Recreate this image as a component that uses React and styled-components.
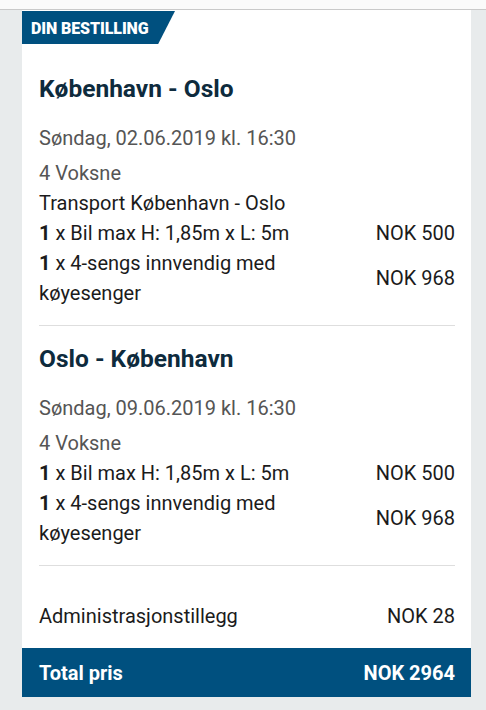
import React from "react";
import styled, { createGlobalStyle } from "styled-components";

const Global = createGlobalStyle`
  html, body { margin: 0; padding: 0; }
  body {
    background: #e8ebec;
    font-family: "Roboto", "Liberation Sans", sans-serif;
    color: #1b1b1b;
  }
`;

const TopStrip = styled.div`
  height: 9px;
  background: #fafafa;
  border-bottom: 1px solid #c9c9c9;
`;

const Page = styled.div`
  padding: 0 15px 13px 22px;
`;

const Card = styled.div`
  background: #fff;
  padding-top: 1px;
`;

const Tab = styled.div`
  display: inline-flex;
  align-items: center;
  height: 33px;
  width: 153px;
  box-sizing: border-box;
  padding: 2px 0 0 9px;
  background: #00507f;
  color: #fff;
  font-weight: 900;
  font-size: 16px;
  letter-spacing: -0.1px;
  clip-path: polygon(0 0, 100% 0, 89% 100%, 0 100%);
`;

const Body = styled.div`
  padding: 0 16px 0 17px;
`;

const Section = styled.div`
  padding: ${(p) => p.$top}px 0 17px;
  border-bottom: 1px solid #dedede;
`;

const Heading = styled.h2`
  margin: 0;
  font-size: 24.5px;
  font-weight: 700;
  color: #0e2b3d;
  line-height: 30px;
`;

const Meta = styled.div`
  font-size: 20px;
  color: #555;
  line-height: 30px;
  margin-top: ${(p) => p.$mt || 0}px;
`;

const Row = styled.div`
  display: flex;
  justify-content: space-between;
  align-items: center;
  font-size: 20px;
  line-height: 30px;
`;

const Label = styled.div`
  max-width: 285px;
`;

const Qty = styled.span`
  font-weight: 700;
`;

const Price = styled.div`
  white-space: nowrap;
`;

const Extra = styled(Row)`
  padding: 35px 0 17px;
`;

const Total = styled.div`
  display: flex;
  justify-content: space-between;
  align-items: center;
  height: 49px;
  padding: 0 16px 0 17px;
  background: #00507f;
  color: #fff;
  font-weight: 700;
  font-size: 20px;
`;

const legs = [
  {
    title: "København - Oslo",
    date: "Søndag, 02.06.2019 kl. 16:30",
    transport: "Transport København - Oslo",
    top: 30,
  },
  {
    title: "Oslo - København",
    date: "Søndag, 09.06.2019 kl. 16:30",
    top: 18,
  },
];

export default function App() {
  return (
    <>
      <Global />
      <TopStrip />
      <Page>
        <Card>
          <Tab>DIN BESTILLING</Tab>
          <Body>
            {legs.map((l) => (
              <Section key={l.title} $top={l.top}>
                <Heading>{l.title}</Heading>
                <Meta $mt={19}>{l.date}</Meta>
                <Meta $mt={5}>4 Voksne</Meta>
                {l.transport && (
                  <Row>
                    <Label>{l.transport}</Label>
                  </Row>
                )}
                <Row>
                  <Label>
                    <Qty>1</Qty> x Bil max H: 1,85m x L: 5m
                  </Label>
                  <Price>NOK 500</Price>
                </Row>
                <Row>
                  <Label>
                    <Qty>1</Qty> x 4-sengs innvendig med køyesenger
                  </Label>
                  <Price>NOK 968</Price>
                </Row>
              </Section>
            ))}
            <Extra>
              <Label>Administrasjonstillegg</Label>
              <Price>NOK 28</Price>
            </Extra>
          </Body>
          <Total>
            <span>Total pris</span>
            <span>NOK 2964</span>
          </Total>
        </Card>
      </Page>
    </>
  );
}
